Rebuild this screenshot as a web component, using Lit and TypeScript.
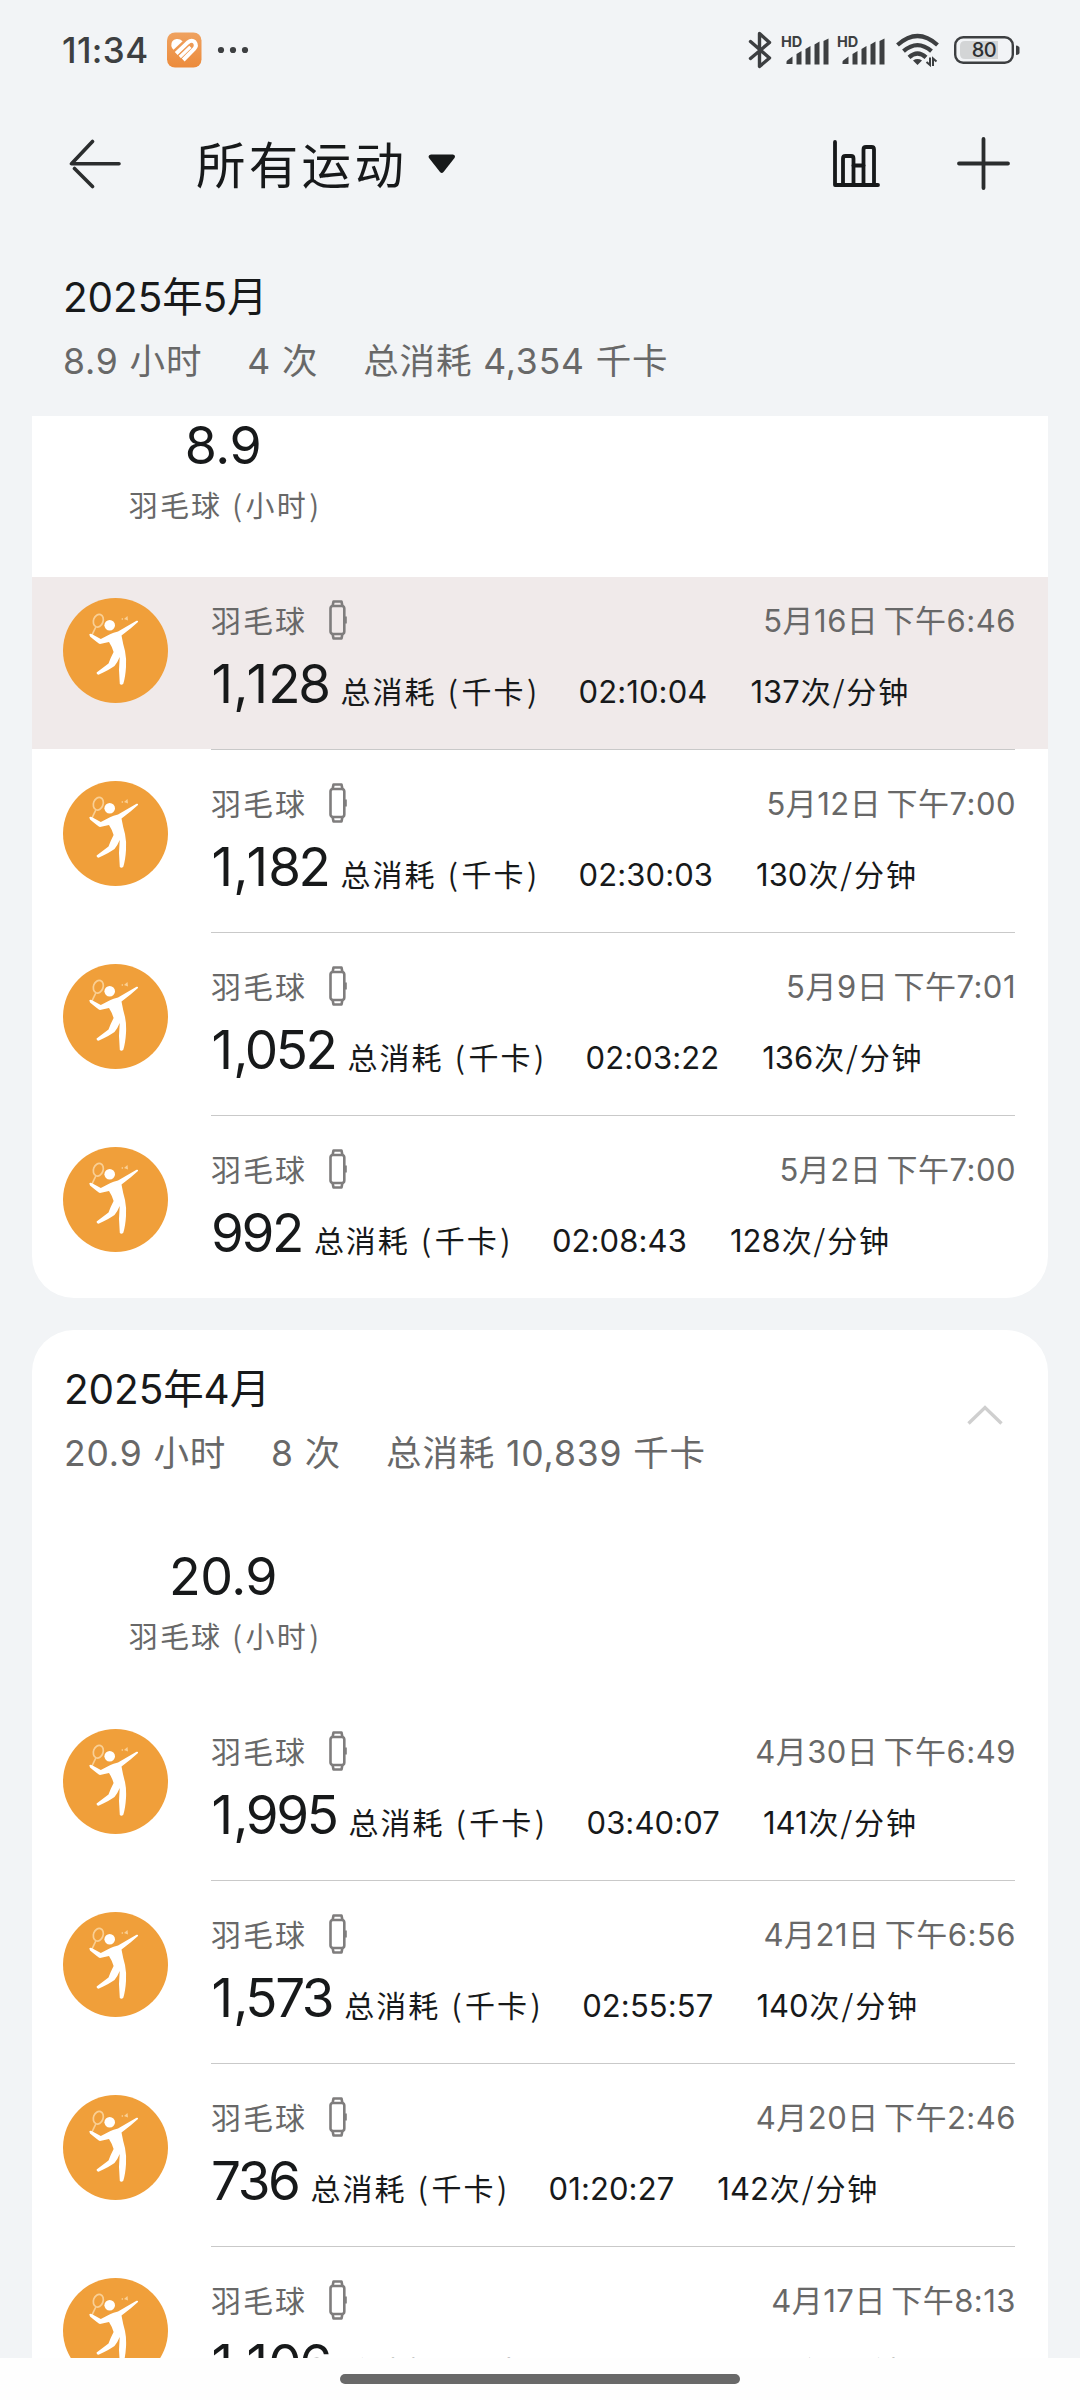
import { LitElement, html, svg, css } from "lit";
import { customElement, property } from "lit/decorators.js";

interface Workout {
  date: string;
  kcal: string;
  time: string;
  rate: string;
  active?: boolean;
}

interface Month {
  title: string;
  hours: string;
  count: string;
  total: string;
  workouts: Workout[];
}

const MAY: Month = {
  title: "2025年5月",
  hours: "8.9",
  count: "4",
  total: "4,354",
  workouts: [
    { date: "5月16日 下午6:46", kcal: "1,128", time: "02:10:04", rate: "137", active: true },
    { date: "5月12日 下午7:00", kcal: "1,182", time: "02:30:03", rate: "130" },
    { date: "5月9日 下午7:01", kcal: "1,052", time: "02:03:22", rate: "136" },
    { date: "5月2日 下午7:00", kcal: "992", time: "02:08:43", rate: "128" },
  ],
};

const APRIL: Month = {
  title: "2025年4月",
  hours: "20.9",
  count: "8",
  total: "10,839",
  workouts: [
    { date: "4月30日 下午6:49", kcal: "1,995", time: "03:40:07", rate: "141" },
    { date: "4月21日 下午6:56", kcal: "1,573", time: "02:55:57", rate: "140" },
    { date: "4月20日 下午2:46", kcal: "736", time: "01:20:27", rate: "142" },
    { date: "4月17日 下午8:13", kcal: "1,106", time: "02:03:11", rate: "135" },
  ],
};

const signal = svg`
  <path d="M6 25.5 L6 23.5 Q6 22.5 7 21.8 L12 18 V25.5 Z"/>
  <path d="M16 26 V15.5 L21 12.5 V26 Z"/>
  <path d="M25 26 V10.5 L30 7.5 V26 Z"/>
  <path d="M34 26 V6 L39 3 V26 Z"/>
  <path d="M43 26 V2.5 L48 0 V26 Z"/>`;

@customElement("status-bar")
export class StatusBar extends LitElement {
  static styles = css`
    :host {
      display: flex;
      align-items: center;
      height: 100px;
      padding: 0 60px 0 62px;
      box-sizing: border-box;
      color: #3d3f41;
      font-family: Inter, "Liberation Sans", sans-serif;
    }
    svg { display: block; flex: none; }
    .clock { font-size: 35px; font-weight: 500; line-height: 60px; letter-spacing: 0.4px; width: 105px; white-space: nowrap; }
    .app { margin-right: 15px; }
    .fill { flex: 1; }
    .bt { margin-right: 8px; }
    .cell { margin-right: 7px; }
    .wifi { margin: 0 15px 0 4px; }
    .hd { font: 700 14.5px Inter, sans-serif; }
    .pct { font: 500 20px Inter, sans-serif; letter-spacing: -0.4px; }
  `;

  render() {
    return html`
      <span class="clock">11:34</span>
      <svg class="app" width="35" height="36" viewBox="0 0 35 36">
        <defs>
          <linearGradient id="g" x1="0" y1="0" x2="0" y2="1">
            <stop offset="0" stop-color="#efa260" /><stop offset="1" stop-color="#ec8b3c" />
          </linearGradient>
        </defs>
        <rect y="0.5" width="34.5" height="35" rx="8" fill="url(#g)" />
        <path d="M4.3 14 Q3.8 8 9.5 7 Q13 6.6 15.6 9.2 L6.5 17.8 Q4.8 16.4 4.3 14 Z" fill="#fff" />
        <g fill="none" stroke="#fff" stroke-width="4" stroke-linejoin="round">
          <path d="M9.2 21.5 L20.6 10.6 Q24.8 7.2 27.6 10 Q30.4 13.6 27 17.2 L16.2 28" />
          <path d="M12.8 25 L23.4 14.8" stroke-width="3.2" />
        </g>
      </svg>
      <svg width="32" height="8" viewBox="0 0 32 8" fill="currentColor">
        <circle cx="4" cy="4" r="3.1" /><circle cx="16" cy="4" r="3.1" /><circle cx="28" cy="4" r="3.1" />
      </svg>
      <span class="fill"></span>
      <svg class="bt" width="24" height="38" viewBox="0 0 24 38" fill="none" stroke="currentColor" stroke-width="3.4" stroke-linecap="round" stroke-linejoin="round">
        <path d="M2.5 10.5 L21.5 27 L11.5 35.5 V2.5 L21.5 11.5 L2.5 27.5" />
      </svg>
      ${[0, 1].map(
        () => html`<svg class="cell" width="49" height="32" viewBox="0 0 49 32" fill="currentColor">
          <text class="hd" x="1" y="12.5">HD</text>
          <g transform="translate(0.5 4.5)">${signal}</g>
        </svg>`
      )}
      <svg class="wifi" width="43" height="34" viewBox="0 0 43 34" fill="none" stroke="currentColor" stroke-width="4.2">
        <path d="M1.5 12 Q21.5 -6 41.5 12" />
        <path d="M7.5 18.2 Q21.5 6 35.5 18.2" />
        <path d="M13 24.4 Q21.5 16.5 30 24.4" />
        <path d="M17 27.5 Q21.5 24.6 26 27.5 L21.5 32 Z" fill="currentColor" stroke="none" />
        <path d="M34 24.5 V32 L30.5 29 M37 33 V25.5 L40.5 28.5" stroke-width="2" />
      </svg>
      <svg width="66" height="28" viewBox="0 0 66 28">
        <rect x="1.2" y="1.2" width="57.6" height="25.6" rx="8" fill="none" stroke="currentColor" stroke-width="2.4" />
        <path d="M11 5 H44 V23 H11 Q6 23 6 18 V10 Q6 5 11 5 Z" fill="#d3d5d6" />
        <path d="M62 9.5 Q65.5 10 65.5 12 V16.5 Q65.5 18.5 62 19 Z" fill="currentColor" />
        <text class="pct" x="30" y="21.2" text-anchor="middle" fill="#2e3032">80</text>
      </svg>
    `;
  }
}

@customElement("title-bar")
export class TitleBar extends LitElement {
  static styles = css`
    :host {
      display: flex;
      align-items: center;
      height: 127px;
      padding: 0 70px 0 69px;
      box-sizing: border-box;
      color: #17191a;
    }
    svg { display: block; flex: none; }
    .back { margin-right: 75px; }
    .title { font: 400 49.5px/72px "Noto Sans CJK SC", sans-serif; letter-spacing: 3.3px; white-space: nowrap; margin-bottom: 2px; }
    .fill { flex: 1; }
    .chart { margin-right: 77px; }
    .caret { margin-left: 21px; }
  `;

  render() {
    return html`
      <svg class="back" width="52" height="50" viewBox="0 0 52 50" fill="none" stroke="#2b2d2e" stroke-width="3.6" stroke-linecap="round" stroke-linejoin="round">
        <path d="M23.5 2.5 L2.5 24.8 H50" /><path d="M5.5 29.5 L23.5 47.5" />
      </svg>
      <span class="title">所有运动</span>
      <svg class="caret" width="28" height="20" viewBox="0 0 28 20">
        <path d="M3 0.5 H25 Q28 1.2 26.5 4 L15.5 18 Q13.8 19.8 12 18 L1 4 Q-0.5 1.2 3 0.5 Z" fill="#17191a" />
      </svg>
      <span class="fill"></span>
      <svg class="chart" width="47" height="47" viewBox="0 0 47 47" fill="none" stroke="currentColor" stroke-width="3.8" stroke-linecap="round" stroke-linejoin="round">
        <path d="M2 2 V45 H45" />
        <path d="M10 45 V18.5 Q10 16 12.5 16 H18 Q20.5 16 20.5 18.5 V45" />
        <path d="M20.5 25.5 H30.5" />
        <path d="M30.5 45 V9.5 Q30.5 7 33 7 H38.5 Q41 7 41 9.5 V45" />
      </svg>
      <svg width="53" height="53" viewBox="0 0 53 53" fill="none" stroke="#2b2d2e" stroke-width="3.8" stroke-linecap="round">
        <path d="M26.5 2 V51 M2 26.5 H51" />
      </svg>
    `;
  }
}

@customElement("month-head")
export class MonthHead extends LitElement {
  @property({ attribute: false }) month!: Month;

  static styles = css`
    :host { display: block; font-family: Inter, "Noto Sans CJK SC", sans-serif; white-space: nowrap; }
    .title { font-size: 40.5px; line-height: 64px; color: #17191a; letter-spacing: -0.1px; }
    .sub { display: flex; gap: 45px; font-size: 35.5px; line-height: 64px; color: #686868; letter-spacing: 0.85px; }
  `;

  render() {
    const m = this.month;
    return html`
      <div class="title">${m.title}</div>
      <div class="sub">
        <span>${m.hours} 小时</span><span>${m.count} 次</span><span>总消耗 ${m.total} 千卡</span>
      </div>
    `;
  }
}

@customElement("month-stat")
export class MonthStat extends LitElement {
  @property() value = "";

  static styles = css`
    :host { display: flex; flex-direction: column; align-items: center; width: 382px; white-space: nowrap; }
    .value { font: 400 52px/60px Inter, sans-serif; color: #17191a; letter-spacing: -0.5px; }
    .label { font: 400 29px/56px "Noto Sans CJK SC", sans-serif; letter-spacing: 2.1px; color: #686868; margin-left: 4px; }
    .paren { margin: 0 1.5px; }
    .paren.end { margin-right: 0; }
  `;

  render() {
    return html`<span class="value">${this.value}</span
      ><span class="label">羽毛球 <span class="paren">(</span>小时<span class="paren end">)</span></span>`;
  }
}

@customElement("workout-row")
export class WorkoutRow extends LitElement {
  @property({ attribute: false }) workout!: Workout;

  static styles = css`
    :host { display: flex; height: 172px; padding: 0 32px 0 31px; box-sizing: border-box; white-space: nowrap; }
    :host([active]) { background: #f0eaea; }
    svg { display: block; flex: none; }
    .sport { margin: 21px 43px 0 0; }
    .body { flex: 1; padding-top: 20px; font-family: Inter, "Noto Sans CJK SC", sans-serif; }
    .line { display: flex; align-items: baseline; }
    .top { height: 45px; color: #686868; }
    .name { font: 400 30px/44px "Noto Sans CJK SC", sans-serif; letter-spacing: 2px; }
    .watch { align-self: center; margin: 0 auto 0 22px; }
    .date { font-size: 31px; line-height: 44px; letter-spacing: 0.5px; word-spacing: -4px; }
    .data { margin-top: 12px; color: #17191a; }
    .kcal { font-size: 53px; line-height: 60px; letter-spacing: -2.4px; margin-right: 12px; }
    .one { margin: 0 2.5px 0 0.5px; }
    .unit { font: 400 30px/60px "Noto Sans CJK SC", sans-serif; letter-spacing: 2px; word-spacing: 1px; margin-right: 38px; }
    .paren { margin: 0 1.5px; }
    .time { font-size: 31px; line-height: 60px; letter-spacing: 0.1px; margin-right: 43px; }
    .rate { font-size: 31px; line-height: 60px; }
    .per { font: 400 30px/60px "Noto Sans CJK SC", sans-serif; letter-spacing: 1.9px; margin-left: 1px; }
  `;

  render() {
    const w = this.workout;
    const kcal = [...w.kcal].map((c) => (c === "1" ? html`<span class="one">1</span>` : c));
    return html`
      <svg class="sport" width="105" height="105" viewBox="0 0 105 105">
        <circle cx="52.5" cy="52.5" r="52.5" fill="#f09f3a" />
        <g fill="none" stroke="#f9cf94" stroke-width="1.7">
          <ellipse cx="35.3" cy="22.7" rx="4.8" ry="6.5" transform="rotate(20 35.3 22.7)" />
          <path d="M32.8 29 L29 37" />
        </g>
        <path d="M58 21 L60 20 V22 Z M61 21 L64.5 18 L65 22.5 Z" fill="#f9cf94" />
        <circle cx="46.7" cy="27.3" r="5.3" fill="#fff" />
        <path d="M26.3 36.2 Q27.5 35.3 29.5 36.6 L37.8 41 L47.5 36 Q50 34.6 55 33.5 L73.5 22.8 Q75.5 22.4 75 24 L67.5 30.5 L58.5 37.5 Q60 46 62 53 Q63.5 60 63 69 Q62.4 79 60.3 85.8 Q58.5 87.5 56.8 86 L56 72 L56.7 59 Q54.5 64.5 51.5 68 Q47 71.5 35.5 76.7 Q33.3 76.5 33.6 74.5 L45.5 65.5 Q47.5 60 50.6 54 Q49 48.5 46 44 L37 46 Q35.5 45.6 27 38.5 Z" fill="#fff" />
      </svg>
      <div class="body">
        <div class="line top">
          <span class="name">羽毛球</span>
          <svg class="watch" width="18" height="40" viewBox="0 0 18 40" fill="none" stroke="#7f7d7d" stroke-width="2.6" stroke-linejoin="round">
            <path d="M3.5 6.5 L4.5 1.5 H12.5 L13.5 6.5" />
            <path d="M3.5 33.5 L4.5 38.5 H12.5 L13.5 33.5" />
            <rect x="1.5" y="6" width="13.8" height="28" rx="2.5" />
            <path d="M16.5 16.5 V23.5" />
          </svg>
          <span class="date">${w.date}</span>
        </div>
        <div class="line data">
          <span class="kcal">${kcal}</span>
          <span class="unit">总消耗 <span class="paren">(</span>千卡<span class="paren">)</span></span>
          <span class="time">${w.time}</span>
          <span class="rate">${w.rate}<span class="per">次/分钟</span></span>
        </div>
      </div>
    `;
  }
}

@customElement("app-root")
export class AppRoot extends LitElement {
  static styles = css`
    :host { display: flex; flex-direction: column; width: 1080px; height: 2400px; overflow: hidden; background: #f2f4f6; }
    .pinned { padding: 39px 63px 22px; }
    .list { flex: 1; min-height: 0; overflow: hidden; padding: 0 32px; }
    .card { background: #fff; border-radius: 42px; }
    .card.first { border-radius: 0 0 42px 42px; height: 882px; margin-bottom: 32px; }
    .card.first .stat { padding-bottom: 45px; }
    .head { display: flex; align-items: center; justify-content: space-between; padding: 28px 45px 0 32px; }
    .fold { display: block; margin-top: -14px; }
    .stat.second { padding: 61px 0 45px; }
    .divider { height: 1px; margin: 0 33px 10px 179px; background: #c9c9c9; }
    .nav { display: flex; justify-content: center; height: 42px; background: #fefefe; padding-top: 16px; box-sizing: border-box; }
    .pill { width: 400px; height: 10px; border-radius: 5px; background: #696969; }
  `;

  private rows(list: Workout[]) {
    return list.map(
      (w, i) => html`
        ${i ? html`<div class="divider"></div>` : null}
        <workout-row .workout=${w} ?active=${w.active}></workout-row>
      `
    );
  }

  render() {
    return html`
      <status-bar></status-bar>
      <title-bar></title-bar>
      <div class="pinned"><month-head .month=${MAY}></month-head></div>
      <div class="list">
        <div class="card first">
          <div class="stat"><month-stat value=${MAY.hours}></month-stat></div>
          ${this.rows(MAY.workouts)}
        </div>
        <div class="card">
          <div class="head">
            <month-head .month=${APRIL}></month-head>
            <svg class="fold" width="36" height="20" viewBox="0 0 36 20" fill="none" stroke="#cfcfcf" stroke-width="3.4">
              <path d="M1.5 18.5 L18 2.5 L34.5 18.5" />
            </svg>
          </div>
          <div class="stat second"><month-stat value=${APRIL.hours}></month-stat></div>
          ${this.rows(APRIL.workouts)}
        </div>
      </div>
      <div class="nav"><div class="pill"></div></div>
    `;
  }
}
